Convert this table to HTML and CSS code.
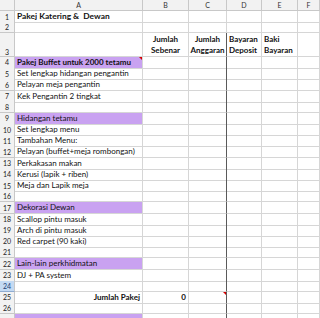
FILE: index.html
```html
<!DOCTYPE html>
<html>
<head>
<meta charset="utf-8">
<link rel="stylesheet" href="styles.css">
</head>
<body>
<div class="sheet">
  <div class="row hdr"><div class="corner"></div><div>A</div><div>B</div><div>C</div><div>D</div><div>E</div><div>F</div></div>
  <div class="row top"><div class="rh">1</div><div class="c bold title">Pakej Katering &amp;  Dewan</div><div></div><div></div><div></div><div></div><div></div></div>
  <div class="row top"><div class="rh">2</div><div></div><div></div><div></div><div></div><div></div><div></div></div>
  <div class="row tall"><div class="rh">3</div><div></div><div class="c bold ctr">Jumlah
Sebenar</div><div class="c bold ctr">Jumlah
Anggaran</div><div class="c bold">Bayaran
Deposit</div><div class="c bold">Baki
Bayaran</div><div></div></div>
  <div class="row"><div class="rh">4</div><div class="c bold fill note">Pakej Buffet untuk 2000 tetamu</div><div></div><div></div><div></div><div></div><div></div></div>
  <div class="row"><div class="rh">5</div><div class="c">Set lengkap hidangan pengantin</div><div></div><div></div><div></div><div></div><div></div></div>
  <div class="row"><div class="rh">6</div><div class="c">Pelayan meja pengantin</div><div></div><div></div><div></div><div></div><div></div></div>
  <div class="row"><div class="rh">7</div><div class="c">Kek Pengantin 2 tingkat</div><div></div><div></div><div></div><div></div><div></div></div>
  <div class="row"><div class="rh">8</div><div></div><div></div><div></div><div></div><div></div><div></div></div>
  <div class="row"><div class="rh">9</div><div class="c fill">Hidangan tetamu</div><div></div><div></div><div></div><div></div><div></div></div>
  <div class="row"><div class="rh">10</div><div class="c">Set lengkap menu</div><div></div><div></div><div></div><div></div><div></div></div>
  <div class="row"><div class="rh">11</div><div class="c">Tambahan Menu:</div><div></div><div></div><div></div><div></div><div></div></div>
  <div class="row"><div class="rh">12</div><div class="c">Pelayan (buffet+meja rombongan)</div><div></div><div></div><div></div><div></div><div></div></div>
  <div class="row"><div class="rh">13</div><div class="c">Perkakasan makan</div><div></div><div></div><div></div><div></div><div></div></div>
  <div class="row"><div class="rh">14</div><div class="c">Kerusi (lapik + riben)</div><div></div><div></div><div></div><div></div><div></div></div>
  <div class="row"><div class="rh">15</div><div class="c">Meja dan Lapik meja</div><div></div><div></div><div></div><div></div><div></div></div>
  <div class="row"><div class="rh">16</div><div></div><div></div><div></div><div></div><div></div><div></div></div>
  <div class="row"><div class="rh">17</div><div class="c fill">Dekorasi Dewan</div><div></div><div></div><div></div><div></div><div></div></div>
  <div class="row"><div class="rh">18</div><div class="c">Scallop pintu masuk</div><div></div><div></div><div></div><div></div><div></div></div>
  <div class="row"><div class="rh">19</div><div class="c">Arch di pintu masuk</div><div></div><div></div><div></div><div></div><div></div></div>
  <div class="row"><div class="rh">20</div><div class="c">Red carpet (90 kaki)</div><div></div><div></div><div></div><div></div><div></div></div>
  <div class="row"><div class="rh">21</div><div></div><div></div><div></div><div></div><div></div><div></div></div>
  <div class="row"><div class="rh">22</div><div class="c fill">Lain-lain perkhidmatan</div><div></div><div></div><div></div><div></div><div></div></div>
  <div class="row"><div class="rh">23</div><div class="c">DJ + PA system</div><div></div><div></div><div></div><div></div><div></div></div>
  <div class="row"><div class="rh sel">24</div><div></div><div></div><div></div><div></div><div></div><div></div></div>
  <div class="row"><div class="rh">25</div><div class="c bold right">Jumlah Pakej</div><div class="c bold right">0</div><div class="note"></div><div></div><div></div><div></div></div>
  <div class="row"><div class="rh">26</div><div></div><div></div><div></div><div></div><div></div><div></div></div>
  <div class="row"><div class="rh"></div><div class="c fill"></div><div></div><div></div><div></div><div></div><div></div></div>
</div>
</body>
</html>
```
FILE: styles.css
```css
body {
  margin: 0;
  background: #fff;
  font-family: Lato, "Liberation Sans", sans-serif;
  font-size: 8px;
  color: #111;
  overflow: hidden;
}

.sheet {
  width: 320px;
}

.row {
  display: grid;
  grid-template-columns: 15px 128px 46px 38px 35px 36px 22px;
  height: 11.2px;
}

.row > div {
  box-sizing: border-box;
  border-right: 1px solid #d6d6d6;
  border-bottom: 1px solid #d6d6d6;
  display: flex;
  align-items: center;
  white-space: pre;
  min-width: 0;
}

.c {
  padding: 0 2px;
  line-height: 11px;
}

.title {
  font-size: 8.4px;
}

/* column letters */
.hdr {
  height: 11px;
}

.hdr > div {
  background: #f2f2f2;
  border-color: #c8c8c8;
  justify-content: center;
  font-size: 7px;
  color: #333;
}

/* row numbers */
.row > .rh {
  background: #f2f2f2;
  border-color: #c8c8c8;
  justify-content: center;
  font-size: 7px;
  color: #222;
}

.row > .sel {
  background: #c4daf3;
  color: #1d3f73;
  border-bottom-color: #8fabd0;
}

.tall {
  height: 23.6px;
}

.tall > div {
  align-items: flex-end;
}

.bold {
  font-weight: bold;
}

.ctr {
  justify-content: center;
  text-align: center;
}

.right {
  justify-content: flex-end;
}

.fill {
  background: #c9a2f1;
}

/* outlined edge between C and D from row 3 down */
.row:not(.hdr):not(.top) > div:nth-child(4) {
  border-right-color: #5a5a5a;
}

/* comment marker */
.note {
  position: relative;
}

.note::after {
  content: "";
  position: absolute;
  top: 0;
  right: 0;
  border-top: 3px solid #d40000;
  border-left: 3px solid transparent;
}
```
